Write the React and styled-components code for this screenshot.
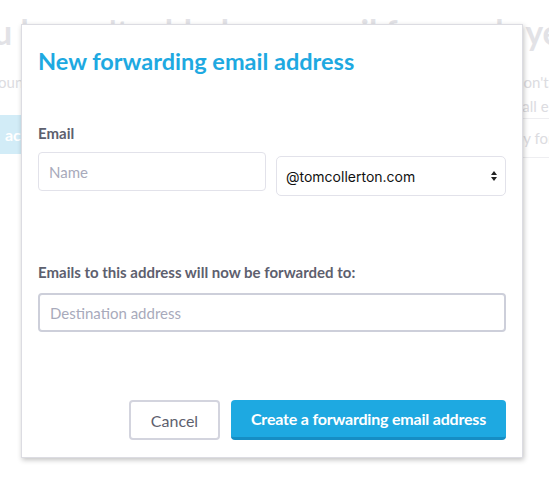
import React from 'react'
import styled, { createGlobalStyle } from 'styled-components'

const GlobalStyle = createGlobalStyle`
    html, body {
        margin: 0;
        padding: 0;
        background: #ffffff;
        overflow: hidden;
    }
    body {
        font-family: Lato, "Open Sans", sans-serif;
    }
`;

function App() {
    return (
        <>
            <GlobalStyle />
            <PageStyled>
                <div className="backdrop">
                    <h1>You haven't added any email forwards yet</h1>
                    <div className="columns">
                        <div className="main-col">
                            <p>Your account</p>
                            <span className="add-btn">Add account</span>
                        </div>
                        <div className="side-col">
                            <p>I don't have</p>
                            <p>To all email</p>
                            <div className="table-row">by forwarding</div>
                        </div>
                    </div>
                </div>

                <ModalStyled role="dialog">
                    <h2>New forwarding email address</h2>

                    <Field>
                        <Label>Email</Label>
                        <div className="email-row">
                            <TextInput $width={228} placeholder="Name" />
                            <Select defaultValue="tomcollerton.com">
                                <option value="tomcollerton.com">@tomcollerton.com</option>
                            </Select>
                        </div>
                    </Field>

                    <Field $top={67} $gap={12}>
                        <Label>Emails to this address will now be forwarded to:</Label>
                        <TextInput $strong placeholder="Destination address" />
                    </Field>

                    <div className="actions">
                        <Button>Cancel</Button>
                        <Button $primary>Create a forwarding email address</Button>
                    </div>
                </ModalStyled>
            </PageStyled>
        </>
    )
}

const PageStyled = styled.div`
    position: relative;
    width: 549px;
    height: 486px;
    overflow: hidden;
    background: #ffffff;

    .backdrop{
        display: flex;
        flex-direction: column;
        align-items: center;
        padding-top: 12px;
        color: #dcdce1;
        h1{
            margin: 0 0 0 -20px;
            white-space: nowrap;
            font-size: 33.5px;
            font-weight: 700;
            line-height: 40px;
            color: #e2e2e6;
        }
        p{
            margin: 0;
            white-space: nowrap;
            font-size: 15px;
            line-height: 24px;
        }
    }
    .columns{
        align-self: stretch;
        display: flex;
        justify-content: space-between;
        margin-top: 18px;
    }
    .main-col{
        display: flex;
        flex-direction: column;
        align-items: flex-start;
        margin-left: -57px;
        gap: 21px;
        .add-btn{
            width: 180px;
            height: 39px;
            line-height: 39px;
            margin-left: 14px;
            padding-left: 12px;
            background: #d2ecf7;
            color: #ffffff;
            font-weight: 700;
            font-size: 16px;
            word-spacing: 3px;
            border-radius: 4px;
            white-space: nowrap;
            overflow: hidden;
        }
    }
    .side-col{
        display: flex;
        flex-direction: column;
        width: 44px;
        p{
            margin-left: 2px;
        }
        p + p{
            margin-left: -2px;
        }
        .table-row{
            margin-top: 0;
            margin-left: -40px;
            width: 120px;
            height: 38px;
            line-height: 38px;
            border-top: 1px solid #eeeef1;
            border-bottom: 1px solid #eeeef1;
            font-size: 15px;
            color: #dcdce1;
            white-space: nowrap;
            padding-left: 50px;
        }
    }
`;

const ModalStyled = styled.div`
    position: absolute;
    left: 21px;
    top: 24px;
    width: 502px;
    height: 434px;
    box-sizing: border-box;
    display: flex;
    flex-direction: column;
    padding: 21px 16px 17px;
    background: #ffffff;
    border: 1px solid #dcdce2;
    box-shadow: 1px 2px 5px rgba(0, 0, 0, 0.24);

    h2{
        margin: 0;
        font-size: 23.5px;
        line-height: 30px;
        font-weight: 700;
        color: #1ea9e1;
    }

    .email-row{
        display: flex;
        gap: 10px;
        align-items: flex-start;
    }

    .actions{
        margin-top: auto;
        display: flex;
        justify-content: flex-end;
        gap: 11px;
    }
`;

const Field = styled.div`
    display: flex;
    flex-direction: column;
    gap: ${props => props.$gap || 10}px;
    margin-top: ${props => props.$top || 48}px;
`;

const Label = styled.label`
    font-size: 15px;
    line-height: 18px;
    font-weight: 700;
    color: #5d606e;
`;

const TextInput = styled.input`
    box-sizing: border-box;
    flex: none;
    width: ${props => props.$width ? `${props.$width}px` : '100%'};
    height: 39px;
    padding: 0 10px;
    border: ${props => props.$strong ? '2px solid #cdcfda' : '1px solid #e2e2ea'};
    border-radius: 4px;
    font-family: Lato, sans-serif;
    font-size: 15px;
    color: #3c3f4c;
    outline: none;
    &::placeholder{
        color: #a8aabb;
    }
`;

const Select = styled.select`
    box-sizing: border-box;
    flex: none;
    width: 230px;
    height: 40px;
    margin-top: 4px;
    padding: 0 26px 0 9px;
    border: 1px solid #e2e2ea;
    border-radius: 5px;
    background: #ffffff;
    font-family: Inter, "Liberation Sans", sans-serif;
    font-size: 14px;
    color: #111111;
    appearance: none;
    background-image: url("data:image/svg+xml;utf8,<svg xmlns='http://www.w3.org/2000/svg' width='8' height='12'><path d='M4 1 L7 5 L1 5 Z M4 11 L7 7 L1 7 Z' fill='%23222'/></svg>");
    background-repeat: no-repeat;
    background-position: right 7px center;
`;

const Button = styled.button`
    box-sizing: border-box;
    height: 40px;
    padding: 0;
    border-radius: 4px;
    font-family: Lato, sans-serif;
    font-size: 16px;
    white-space: nowrap;
    cursor: pointer;
    border: ${props => props.$primary ? 'none' : '2px solid #d3d4de'};
    border-bottom: ${props => props.$primary ? '3px solid #168ec4' : '2px solid #d3d4de'};
    background: ${props => props.$primary ? '#1ea9e1' : '#ffffff'};
    color: ${props => props.$primary ? '#ffffff' : '#5d606e'};
    font-weight: ${props => props.$primary ? 700 : 400};
    letter-spacing: ${props => props.$primary ? '-0.2px' : '0'};
    width: ${props => props.$primary ? '275px' : '91px'};
`;

export default App
